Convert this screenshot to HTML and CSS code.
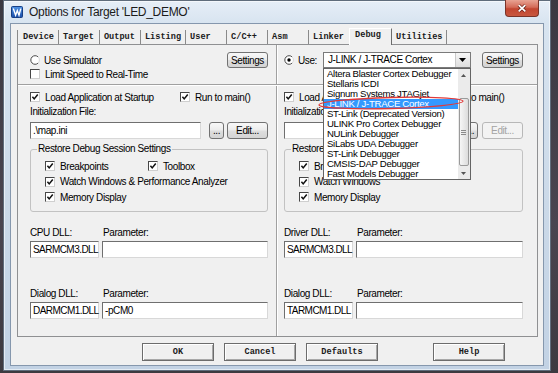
FILE: index.html
```html
<!DOCTYPE html>
<html>
<head>
<meta charset="utf-8">
<link rel="stylesheet" href="styles.css">
</head>
<body>
<div class="window">
  <div class="titlebar">
    <svg class="app-icon" viewBox="0 0 12 12"><defs><linearGradient id="ig" x1="0" y1="0" x2="0" y2="1"><stop offset="0" stop-color="#4f93e6"/><stop offset="1" stop-color="#1b4ea8"/></linearGradient></defs><rect x="0.5" y="0.5" width="11" height="11" rx="1" fill="url(#ig)" stroke="#173f85"/><path d="M2.3 2.6 L4.6 9.2 L6.3 4.6 L8 9.2 L9.8 2.6" fill="none" stroke="#fff" stroke-width="1.4"/></svg>
    <span class="title">Options for Target 'LED_DEMO'</span>
    <div class="close"><svg width="34" height="17" viewBox="0 0 34 17"><path d="M13.5 5 L20.5 11.5 M20.5 5 L13.5 11.5" stroke="#6b2117" stroke-width="3.4" fill="none"/><path d="M13.5 5 L20.5 11.5 M20.5 5 L13.5 11.5" stroke="#fff" stroke-width="1.9" fill="none"/></svg></div>
  </div>
  <div class="client">
    <div class="tabs">
      <span class="tab first">Device</span>
      <span class="tab">Target</span>
      <span class="tab">Output</span>
      <span class="tab">Listing</span>
      <span class="tab">User</span>
      <span class="tab">C/C++</span>
      <span class="tab">Asm</span>
      <span class="tab">Linker</span>
      <span class="tab active">Debug</span>
      <span class="tab">Utilities</span>
    </div>
    <div class="panel">
      <div class="prow top">
        <div class="half left">
          <div class="row1">
            <span class="radio"><svg width="10" height="10" viewBox="0 0 10 10"><circle cx="5" cy="5" r="4.3" fill="#fff"/><path d="M8.1 1.9 A4.3 4.3 0 1 0 8.1 8.1" stroke="#4a4a4a" stroke-width="1" fill="none"/><path d="M8.1 1.9 A4.3 4.3 0 0 1 8.1 8.1" stroke="#d9d9d9" stroke-width="1" fill="none"/></svg></span>
            <span>Use Simulator</span>
            <button class="btn push">Settings</button>
          </div>
          <div class="row2"><span class="cb"></span><span>Limit Speed to Real-Time</span></div>
        </div>
        <div class="vdiv"></div>
        <div class="half right">
          <div class="row1">
            <span class="radio"><svg width="10" height="10" viewBox="0 0 10 10"><circle cx="5" cy="5" r="4.3" fill="#fff"/><path d="M8.1 1.9 A4.3 4.3 0 1 0 8.1 8.1" stroke="#4a4a4a" stroke-width="1" fill="none"/><path d="M8.1 1.9 A4.3 4.3 0 0 1 8.1 8.1" stroke="#d9d9d9" stroke-width="1" fill="none"/><circle cx="5" cy="5" r="1.7" fill="#000"/></svg></span>
            <span>Use:</span>
            <div class="combo-wrap">
              <div class="combo">
                <span class="combo-text">J-LINK / J-TRACE Cortex</span>
                <span class="combo-btn"><svg width="7" height="4" viewBox="0 0 7 4"><path d="M0 0 H7 L3.5 4 Z" fill="#000"/></svg></span>
              </div>
              <div class="dropdown">
                <div class="items">
                  <div class="item">Altera Blaster Cortex Debugger</div>
                  <div class="item">Stellaris ICDI</div>
                  <div class="item">Signum Systems JTAGjet</div>
                  <div class="item sel">J-LINK / J-TRACE Cortex</div>
                  <div class="item">ST-Link (Deprecated Version)</div>
                  <div class="item">ULINK Pro Cortex Debugger</div>
                  <div class="item">NULink Debugger</div>
                  <div class="item">SiLabs UDA Debugger</div>
                  <div class="item">ST-Link Debugger</div>
                  <div class="item">CMSIS-DAP Debugger</div>
                  <div class="item">Fast Models Debugger</div>
                </div>
                <div class="sbar">
                  <div class="sb-arrow"><svg width="5" height="3" viewBox="0 0 5 3"><path d="M0 3 H5 L2.5 0 Z" fill="#555"/></svg></div>
                  <div class="sb-track"></div>
                  <div class="thumb"><svg width="5" height="5" viewBox="0 0 5 5"><path d="M0 0.5 H5 M0 2.5 H5 M0 4.5 H5" stroke="#8a8a8a" stroke-width="1"/></svg></div>
                  <div class="sb-fill"></div>
                  <div class="sb-arrow"><svg width="5" height="3" viewBox="0 0 5 3"><path d="M0 0 H5 L2.5 3 Z" fill="#555"/></svg></div>
                </div>
              </div>
              <svg class="mark" width="160" height="16" viewBox="0 0 160 16"><ellipse cx="80" cy="8" rx="72" ry="5.5" transform="rotate(-1.5 80 8)" fill="none" stroke="#e03a3a" stroke-width="1.3"/></svg>
            </div>
            <button class="btn push">Settings</button>
          </div>
        </div>
      </div>
      <div class="hsep"></div>
      <div class="prow bottom">
        <div class="half left">
          <div class="load-row">
            <span class="chk first-col"><span class="cb"><svg viewBox="0 0 9 9"><path d="M1.6 4.2 L3.6 6.6 L7.6 1.6" /></svg></span>Load Application at Startup</span>
            <span class="chk"><span class="cb"><svg viewBox="0 0 9 9"><path d="M1.6 4.2 L3.6 6.6 L7.6 1.6" /></svg></span>Run to main()</span>
          </div>
          <div class="label-row">Initialization File:</div>
          <div class="file-row">
            <div class="field path">.\map.ini</div>
            <button class="btn dots">...</button>
            <button class="btn edit">Edit...</button>
          </div>
          <fieldset class="group">
            <legend>Restore Debug Session Settings</legend>
            <div class="group-body">
              <div class="grow">
                <span class="chk bp"><span class="cb"><svg viewBox="0 0 9 9"><path d="M1.6 4.2 L3.6 6.6 L7.6 1.6" /></svg></span>Breakpoints</span>
                <span class="chk"><span class="cb"><svg viewBox="0 0 9 9"><path d="M1.6 4.2 L3.6 6.6 L7.6 1.6" /></svg></span>Toolbox</span>
              </div>
              <div class="grow"><span class="chk"><span class="cb"><svg viewBox="0 0 9 9"><path d="M1.6 4.2 L3.6 6.6 L7.6 1.6" /></svg></span>Watch Windows &amp; Performance Analyzer</span></div>
              <div class="grow"><span class="chk"><span class="cb"><svg viewBox="0 0 9 9"><path d="M1.6 4.2 L3.6 6.6 L7.6 1.6" /></svg></span>Memory Display</span></div>
            </div>
          </fieldset>
          <div class="dll cpu">
            <span>CPU DLL:</span><span class="plabel">Parameter:</span>
            <div class="field dllname">SARMCM3.DLL</div><div class="field"></div>
          </div>
          <div class="dll dialog">
            <span>Dialog DLL:</span><span class="plabel">Parameter:</span>
            <div class="field dllname">DARMCM1.DLL</div><div class="field">-pCM0</div>
          </div>
        </div>
        <div class="vdiv"></div>
        <div class="half right">
          <div class="load-row">
            <span class="chk first-col"><span class="cb"><svg viewBox="0 0 9 9"><path d="M1.6 4.2 L3.6 6.6 L7.6 1.6" /></svg></span>Load Application at Startup</span>
            <span class="chk"><span class="cb"><svg viewBox="0 0 9 9"><path d="M1.6 4.2 L3.6 6.6 L7.6 1.6" /></svg></span>Run to main()</span>
          </div>
          <div class="label-row">Initialization File:</div>
          <div class="file-row">
            <div class="field path"></div>
            <button class="btn dots">...</button>
            <button class="btn edit disabled">Edit...</button>
          </div>
          <fieldset class="group">
            <legend>Restore Debug Session Settings</legend>
            <div class="group-body">
              <div class="grow">
                <span class="chk bp"><span class="cb"><svg viewBox="0 0 9 9"><path d="M1.6 4.2 L3.6 6.6 L7.6 1.6" /></svg></span>Breakpoints</span>
              </div>
              <div class="grow"><span class="chk"><span class="cb"><svg viewBox="0 0 9 9"><path d="M1.6 4.2 L3.6 6.6 L7.6 1.6" /></svg></span>Watch Windows</span></div>
              <div class="grow"><span class="chk"><span class="cb"><svg viewBox="0 0 9 9"><path d="M1.6 4.2 L3.6 6.6 L7.6 1.6" /></svg></span>Memory Display</span></div>
            </div>
          </fieldset>
          <div class="dll cpu">
            <span>Driver DLL:</span><span class="plabel">Parameter:</span>
            <div class="field dllname">SARMCM3.DLL</div><div class="field"></div>
          </div>
          <div class="dll dialog">
            <span>Dialog DLL:</span><span class="plabel">Parameter:</span>
            <div class="field dllname">TARMCM1.DLL</div><div class="field"></div>
          </div>
        </div>
      </div>
    </div>
    <div class="footer">
      <button class="cbtn">OK</button>
      <button class="cbtn">Cancel</button>
      <button class="cbtn">Defaults</button>
      <button class="cbtn help">Help</button>
    </div>
  </div>
</div>
</body>
</html>
```

FILE: styles.css
```css
html, body {
  margin: 0;
  padding: 0;
}
body {
  width: 558px;
  height: 373px;
  overflow: hidden;
  background: linear-gradient(180deg, #3b3942 0%, #4a4550 60%, #3d3a40 100%);
  font-family: "Liberation Sans", Arial, sans-serif;
  font-size: 10px;
  letter-spacing: -0.4px;
  color: #000;
}

.window {
  box-sizing: border-box;
  width: 548px;
  height: 371px;
  margin-left: 3px;
  border: 1px solid #5f6c7b;
  background: linear-gradient(180deg, #e6eef7 0px, #d8e4f0 22px, #cbd9e8 55%, #c2d2e4 100%);
  box-shadow: inset 0 0 0 1px rgba(255, 255, 255, 0.55);
  padding: 0 6px 4px 6px;
  display: flex;
  flex-direction: column;
}

.titlebar {
  height: 22px;
  display: flex;
  align-items: center;
  padding-left: 1px;
  flex: none;
}
.app-icon {
  width: 12px;
  height: 12px;
  flex: none;
}
.title {
  margin-left: 6px;
  font-size: 12px;
  letter-spacing: -0.3px;
  color: #1b1b1b;
}
.close {
  margin-left: auto;
  margin-right: 5px;
  margin-top: -1px;
  align-self: flex-start;
  width: 34px;
  height: 17px;
  box-sizing: border-box;
  border: 1px solid #7a3328;
  border-top: none;
  border-radius: 0 0 4px 4px;
  background: linear-gradient(180deg, #e8a393 0%, #d46b58 45%, #c24530 55%, #c8573f 100%);
  display: flex;
  align-items: center;
  justify-content: center;
}
.close svg {
  display: block;
}

.client {
  flex: 1;
  background: #f0f0f0;
  border: 1px solid #8597ad;
  display: flex;
  flex-direction: column;
}

/* tabs */
.tabs {
  display: flex;
  align-items: flex-end;
  height: 16px;
  margin: 4px 0 0 6px;
  font-family: "Liberation Mono", "Courier New", monospace;
  font-weight: bold;
  font-size: 8.6px;
  letter-spacing: 0;
  color: #1a1a1a;
}
.tab {
  box-sizing: border-box;
  height: 14px;
  line-height: 14px;
  padding: 0 4px;
  min-width: 41px;
  border-right: 1px solid #8a8a8a;
  white-space: nowrap;
}
.tab.first {
  border-left: 1px solid #8a8a8a;
  padding-left: 5px;
}
.tab.active {
  height: 17px;
  line-height: 12px;
  margin-bottom: -1px;
  margin-left: -1px;
  min-width: 43px;
  padding-left: 5px;
  background: #f0f0f0;
  border-left: 1px solid #ffffff;
  border-top: 1px solid #ffffff;
  border-right: 1px solid #6c6c6c;
  position: relative;
  z-index: 1;
}

/* panel */
.panel {
  box-sizing: border-box;
  width: 521px;
  height: 293px;
  margin-left: 6px;
  border: 1px solid #8f9092;
  display: flex;
  flex-direction: column;
}
.prow {
  display: flex;
}
.prow.top {
  height: 39px;
}
.prow.bottom {
  flex: 1;
}
.hsep {
  border-top: 1px solid #a0a0a0;
  border-bottom: 1px solid #ffffff;
}
.vdiv {
  border-left: 1px solid #a0a0a0;
  border-right: 1px solid #ffffff;
}
.half {
  box-sizing: border-box;
  display: flex;
  flex-direction: column;
}
.half.left {
  width: 258px;
  padding: 0 8px 0 12px;
}
.half.right {
  flex: 1;
  padding: 0 14px 0 6px;
}

.row1 {
  display: flex;
  align-items: center;
  height: 16px;
  margin-top: 7px;
}
.row2 {
  display: flex;
  align-items: center;
  height: 12px;
}

.radio {
  width: 10px;
  height: 10px;
  margin-right: 4px;
  flex: none;
}
.radio svg {
  display: block;
}

.cb {
  box-sizing: border-box;
  width: 10px;
  height: 10px;
  margin-right: 5px;
  flex: none;
  background: #fff;
  border: 1px solid;
  border-color: #474747 #cfcfcf #cfcfcf #474747;
  display: inline-block;
}
.cb svg {
  display: block;
  width: 8px;
  height: 8px;
}
.cb svg path {
  fill: none;
  stroke: #111;
  stroke-width: 1.7;
}

.chk {
  display: flex;
  align-items: center;
  white-space: nowrap;
}
.chk.first-col {
  width: 150px;
}
.chk.bp {
  width: 103px;
}

.btn {
  box-sizing: border-box;
  height: 16px;
  padding: 0;
  border: 1px solid #727272;
  border-radius: 3px;
  background: linear-gradient(180deg, #f8f8f8 0%, #ececec 48%, #dedede 52%, #d4d4d4 100%);
  font-family: "Liberation Sans", Arial, sans-serif;
  font-size: 10px;
  letter-spacing: -0.4px;
  color: #000;
}
.btn.push {
  width: 41px;
  margin-left: auto;
}
.btn.dots {
  width: 15px;
  height: 17px;
  margin-left: 8px;
  line-height: 8px;
}
.btn.edit {
  width: 41px;
  height: 17px;
  margin-left: auto;
}
.btn.disabled {
  color: #a3a3a3;
  border-color: #b8b8b8;
  background: #f3f3f3;
}

.load-row {
  display: flex;
  align-items: center;
  height: 12px;
  margin-top: 5px;
}
.label-row {
  height: 12px;
  line-height: 12px;
  margin-top: 3px;
}
.file-row {
  display: flex;
  height: 17px;
  margin-top: 4px;
}

.field {
  box-sizing: border-box;
  height: 17px;
  background: #fff;
  border: 1px solid;
  border-color: #6f6f6f #d8d8d8 #d8d8d8 #6f6f6f;
  padding: 0 2px;
  line-height: 15px;
  white-space: nowrap;
}
.field.path {
  width: 171px;
}
.field.dllname {
  padding: 0 1px 0 2px;
  letter-spacing: -0.55px;
}

.group {
  margin: 4px 0 0 0;
  padding: 0;
  border: 1px solid #c2c2c2;
  border-radius: 3px;
  min-width: 0;
}
.group legend {
  margin-left: 6px;
  padding: 0 1px;
  height: 12px;
  line-height: 12px;
}
.group-body {
  padding: 5px 0 8px 14px;
  display: flex;
  flex-direction: column;
  gap: 3.5px;
}
.grow {
  display: flex;
  align-items: center;
  height: 12px;
}

.dll {
  display: grid;
  grid-template-columns: 69px 1fr;
  grid-template-rows: 12px 17px;
  column-gap: 3px;
  row-gap: 2px;
  line-height: 12px;
}
.dll.cpu {
  margin-top: 15px;
}
.dll.dialog {
  margin-top: 30px;
}
.plabel {
  padding-left: 1px;
}

/* combo + dropdown */
.combo-wrap {
  position: relative;
  z-index: 5;
  width: 148px;
  height: 16px;
  margin-left: 6px;
}
.combo {
  box-sizing: border-box;
  height: 16px;
  border: 1px solid #7a7a7a;
  background: #fff;
  display: flex;
}
.combo-text {
  flex: 1;
  padding-left: 4px;
  line-height: 14px;
  white-space: nowrap;
}
.combo-btn {
  width: 14px;
  border-left: 1px solid #c9c9c9;
  background: linear-gradient(180deg, #f6f6f6, #dedede);
  display: flex;
  align-items: center;
  justify-content: center;
}
.combo-btn svg {
  display: block;
}
.dropdown {
  position: absolute;
  left: 0;
  top: 16px;
  box-sizing: border-box;
  width: 148px;
  height: 112px;
  border: 1px solid #646464;
  background: #fff;
  display: flex;
}
.items {
  flex: 1;
}
.item {
  height: 10px;
  line-height: 10px;
  padding-left: 3px;
  font-size: 9.6px;
  letter-spacing: -0.3px;
  white-space: nowrap;
  overflow: hidden;
}
.item.sel {
  background: #3399ff;
  color: #fff;
}
.sbar {
  width: 12px;
  background: #ebebeb;
  display: flex;
  flex-direction: column;
}
.sb-arrow {
  height: 12px;
  display: flex;
  align-items: center;
  justify-content: center;
}
.sb-arrow svg {
  display: block;
}
.sb-track {
  height: 17px;
}
.sb-fill {
  flex: 1;
}
.thumb {
  box-sizing: border-box;
  height: 68px;
  margin: 0 1px;
  border: 1px solid #9a9a9a;
  border-radius: 2px;
  background: linear-gradient(90deg, #f6f6f6, #dcdcdc);
  display: flex;
  align-items: center;
  justify-content: center;
}
.thumb svg {
  display: block;
}
.mark {
  position: absolute;
  left: -12px;
  top: 43px;
  z-index: 6;
}

/* footer */
.footer {
  display: flex;
  gap: 10px;
  margin-top: 6px;
  padding-left: 131px;
}
.cbtn {
  box-sizing: border-box;
  width: 72px;
  height: 18px;
  padding: 0;
  background: #f0f0f0;
  border: 1px solid #6c6c6c;
  box-shadow: inset 1px 1px 0 #ffffff, inset -1px -1px 0 #a8a8a8;
  font-family: "Liberation Mono", "Courier New", monospace;
  font-weight: bold;
  font-size: 8.6px;
  letter-spacing: 0;
  color: #1a1a1a;
}
.cbtn.help {
  margin-left: 45px;
}
```
